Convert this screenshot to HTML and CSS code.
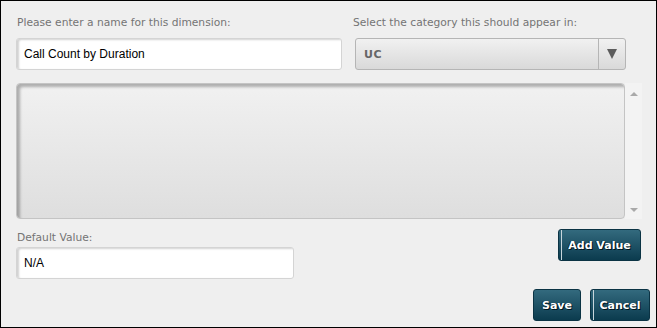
FILE: index.html
```html
<!DOCTYPE html>
<html lang="en">
<head>
    <meta charset="UTF-8">
    <title>Dimension</title>
    <link rel="stylesheet" href="styles.css">
</head>
<body>

<div class="dialog">
    <div class="top-row">
        <div class="field name-field">
            <label class="field-label">Please enter a name for this dimension:</label>
            <input class="text-input" type="text" value="Call Count by Duration">
        </div>
        <div class="field cat-field">
            <label class="field-label cat-label">Select the category this should appear in:</label>
            <div class="select-box">
                <span class="select-value">UC</span>
                <span class="select-arrow"></span>
            </div>
        </div>
    </div>

    <div class="values-row">
        <div class="values-list"></div>
        <div class="scroll-track">
            <span class="arrow-up"></span>
            <span class="arrow-down"></span>
        </div>
    </div>

    <div class="default-row">
        <div class="field default-field">
            <label class="field-label">Default Value:</label>
            <input class="text-input" type="text" value="N/A">
        </div>
        <button class="btn btn-edge add-btn">Add Value</button>
    </div>

    <div class="footer">
        <button class="btn save-btn">Save</button>
        <button class="btn btn-edge cancel-btn">Cancel</button>
    </div>
</div>

</body>
</html>
```

FILE: styles.css
```css
html, body {
    margin: 0;
    padding: 0;
}
.dialog {
    width: 657px;
    height: 328px;
    box-sizing: border-box;
    border: 1px solid #000;
    background-color: #efefef;
    padding: 15px 6px 0 15px;
    font-family: "DejaVu Sans", Verdana, sans-serif;
}
.top-row {
    display: flex;
    gap: 13px;
}
.field {
    display: flex;
    flex-direction: column;
}
.field-label {
    font-size: 10.7px;
    line-height: 14px;
    color: #747474;
    margin-bottom: 8px;
    padding-left: 1px;
}
.cat-label {
    margin-left: -3px;
    white-space: nowrap;
}
.name-field {
    width: 326px;
}
.cat-field {
    width: 271px;
}
.text-input {
    height: 32px;
    box-sizing: border-box;
    border: 1px solid #d4d4d4;
    border-radius: 3px;
    background: #fff;
    box-shadow: inset 2px 1px 2px rgba(0, 0, 0, 0.18);
    padding: 0 7px;
    font-family: "Liberation Sans", Arial, sans-serif;
    font-size: 12px;
    color: #000;
    outline: none;
}
.select-box {
    height: 32px;
    box-sizing: border-box;
    border: 1px solid #b5b5b5;
    border-radius: 3px;
    background: linear-gradient(#f1f1f1, #d9d9d9);
    display: flex;
    align-items: center;
}
.select-value {
    flex: 1;
    padding-left: 8px;
    font-size: 11px;
    font-weight: bold;
    color: #666;
    letter-spacing: 0.5px;
}
.select-arrow {
    width: 26px;
    height: 100%;
    border-left: 1px solid #b5b5b5;
    display: flex;
    align-items: center;
    justify-content: center;
}
.select-arrow::after {
    content: "";
    border-left: 5px solid transparent;
    border-right: 5px solid transparent;
    border-top: 10px solid #5c5c5c;
}
.values-row {
    display: flex;
    margin-top: 13px;
}
.values-list {
    width: 609px;
    height: 136px;
    box-sizing: border-box;
    border-radius: 4px;
    border: 1px solid #c4c4c4;
    background: linear-gradient(#f1f1f1, #dedede);
    box-shadow: inset 3px 3px 3px rgba(0, 0, 0, 0.28);
}
.scroll-track {
    width: 17px;
    height: 136px;
    background: #f3f3f3;
    display: flex;
    flex-direction: column;
    justify-content: space-between;
    align-items: center;
    padding: 9px 0 7px;
    box-sizing: border-box;
}
.arrow-up {
    border-left: 4px solid transparent;
    border-right: 4px solid transparent;
    border-bottom: 4px solid #a9a9a9;
}
.arrow-down {
    border-left: 4px solid transparent;
    border-right: 4px solid transparent;
    border-top: 4px solid #a9a9a9;
}
.default-row {
    display: flex;
    justify-content: space-between;
    margin-top: 9px;
    padding-right: 9px;
}
.default-field {
    width: 278px;
    padding-top: 3px;
}
.default-field .field-label {
    margin-bottom: 2px;
}
.btn {
    height: 32px;
    box-sizing: border-box;
    border: 1px solid #0b3344;
    border-radius: 3px;
    background: linear-gradient(#336a7e, #0b3b4e);
    color: #fff;
    font-family: "DejaVu Sans", Verdana, sans-serif;
    font-size: 11px;
    font-weight: bold;
    text-shadow: 1px 1px 0 #00151e, -1px 0 0 #0a2c3a;
    padding: 0;
    cursor: pointer;
}
.btn-edge {
    background:
        linear-gradient(to right, transparent 2px, #c8d6dc 2px, #c8d6dc 3px, transparent 3px),
        linear-gradient(#336a7e, #0b3b4e);
}
.add-btn {
    width: 83px;
    margin-top: 1px;
}
.footer {
    display: flex;
    justify-content: flex-end;
    gap: 9px;
    margin-top: 10px;
}
.save-btn {
    width: 48px;
}
.cancel-btn {
    width: 60px;
}
```
